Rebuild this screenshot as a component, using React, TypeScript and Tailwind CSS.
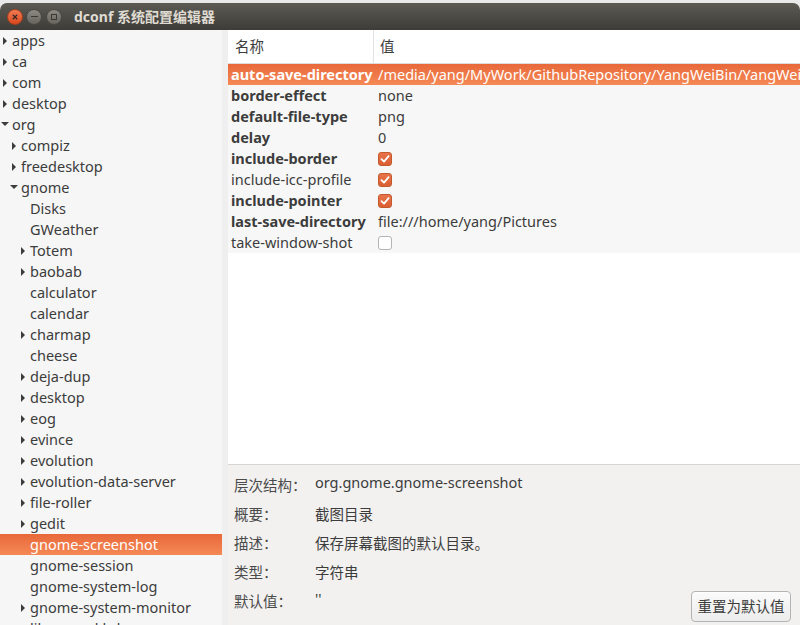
import React from 'react';

type Node = { name: string; level: number; arrow?: 'right' | 'down'; selected?: boolean };

const tree: Node[] = [
  { name: 'apps', level: 0, arrow: 'right' },
  { name: 'ca', level: 0, arrow: 'right' },
  { name: 'com', level: 0, arrow: 'right' },
  { name: 'desktop', level: 0, arrow: 'right' },
  { name: 'org', level: 0, arrow: 'down' },
  { name: 'compiz', level: 1, arrow: 'right' },
  { name: 'freedesktop', level: 1, arrow: 'right' },
  { name: 'gnome', level: 1, arrow: 'down' },
  { name: 'Disks', level: 2 },
  { name: 'GWeather', level: 2 },
  { name: 'Totem', level: 2, arrow: 'right' },
  { name: 'baobab', level: 2, arrow: 'right' },
  { name: 'calculator', level: 2 },
  { name: 'calendar', level: 2 },
  { name: 'charmap', level: 2, arrow: 'right' },
  { name: 'cheese', level: 2 },
  { name: 'deja-dup', level: 2, arrow: 'right' },
  { name: 'desktop', level: 2, arrow: 'right' },
  { name: 'eog', level: 2, arrow: 'right' },
  { name: 'evince', level: 2, arrow: 'right' },
  { name: 'evolution', level: 2, arrow: 'right' },
  { name: 'evolution-data-server', level: 2, arrow: 'right' },
  { name: 'file-roller', level: 2, arrow: 'right' },
  { name: 'gedit', level: 2, arrow: 'right' },
  { name: 'gnome-screenshot', level: 2, selected: true },
  { name: 'gnome-session', level: 2 },
  { name: 'gnome-system-log', level: 2 },
  { name: 'gnome-system-monitor', level: 2, arrow: 'right' },
  { name: 'libgnomekbd', level: 2, arrow: 'right' },
];

type Key = { name: string; bold: boolean; value?: string; check?: boolean; selected?: boolean };

const keys: Key[] = [
  { name: 'auto-save-directory', bold: true, value: '/media/yang/MyWork/GithubRepository/YangWeiBin/YangWeiBin.github.io', selected: true },
  { name: 'border-effect', bold: true, value: 'none' },
  { name: 'default-file-type', bold: true, value: 'png' },
  { name: 'delay', bold: true, value: '0' },
  { name: 'include-border', bold: true, check: true },
  { name: 'include-icc-profile', bold: false, check: true },
  { name: 'include-pointer', bold: true, check: true },
  { name: 'last-save-directory', bold: true, value: 'file:///home/yang/Pictures' },
  { name: 'take-window-shot', bold: false, check: false },
];

const indent = ['pl-0', 'pl-[9px]', 'pl-[18px]'];

function Arrow({ dir, light }: { dir?: 'right' | 'down'; light?: boolean }) {
  const fill = light ? '#ffffff' : '#3c3c3c';
  if (dir === 'right')
    return (
      <svg width="5" height="8" viewBox="0 0 5 8" className="ml-[3px]">
        <path d="M0 0 L4 4 L0 8 Z" fill={fill} />
      </svg>
    );
  if (dir === 'down')
    return (
      <svg width="8" height="5" viewBox="0 0 8 5" className="ml-[1px]">
        <path d="M0 0 L8 0 L4 4 Z" fill={fill} />
      </svg>
    );
  return null;
}

function CheckBox({ on }: { on: boolean }) {
  if (!on) return <div className="w-[14px] h-[14px] rounded-[3px] border border-[#b3b3b3] bg-white" />;
  return (
    <div className="w-[14px] h-[14px] rounded-[3px] border border-[#c4582f] bg-gradient-to-b from-[#e8744a] to-[#da5f31] flex items-center justify-center">
      <svg width="10" height="10" viewBox="0 0 10 10">
        <path d="M1.5 5.2 L4 7.6 L8.6 2.2" fill="none" stroke="#ffffff" strokeWidth="1.8" strokeLinecap="round" strokeLinejoin="round" />
      </svg>
    </div>
  );
}

export default function App() {
  return (
    <div
      className="w-[800px] h-[625px] overflow-hidden bg-[#e9e9e9] flex flex-col text-[#3c3c3c]"
      style={{ fontFamily: '"Noto Sans", "Noto Sans CJK SC", sans-serif' }}
    >
      <div className="h-[3px] shrink-0" />

      {/* title bar */}
      <div className="h-[27px] shrink-0 rounded-t-[7px] bg-gradient-to-b from-[#5c5a53] to-[#3d3c38] flex items-center pl-[7px]">
        <div className="w-[16px] h-[16px] rounded-full bg-gradient-to-b from-[#f27b53] to-[#d9471a] border border-[#a8401c] flex items-center justify-center">
          <svg width="6" height="6" viewBox="0 0 6 6">
            <path d="M0.8 0.8 L5.2 5.2 M5.2 0.8 L0.8 5.2" stroke="#3c2a22" strokeWidth="1.3" />
          </svg>
        </div>
        <div className="ml-[3px] w-[16px] h-[16px] rounded-full bg-gradient-to-b from-[#8d8a82] to-[#66645e] border border-[#4a4843] flex items-center justify-center">
          <div className="w-[7px] h-[1.5px] bg-[#3a3935]" />
        </div>
        <div className="ml-[4px] w-[16px] h-[16px] rounded-full bg-gradient-to-b from-[#8d8a82] to-[#66645e] border border-[#4a4843] flex items-center justify-center">
          <div className="w-[6px] h-[6px] border border-[#3a3935]" />
        </div>
        <span className="ml-[12px] text-[14px] font-bold text-[#dfdbd2] leading-none">dconf 系统配置编辑器</span>
      </div>

      <div className="flex flex-1 min-h-0">
        {/* sidebar tree */}
        <div className="w-[222px] shrink-0 bg-[#f6f6f6] overflow-hidden text-[14.5px]">
          {tree.map((n, i) => (
            <div
              key={i}
              className={`h-[21px] flex items-center whitespace-nowrap ${indent[n.level]} ${
                n.selected ? 'bg-gradient-to-b from-[#e8683a] to-[#f58955] text-white' : ''
              }`}
            >
              <div className="w-[12px] shrink-0 flex items-center">
                <Arrow dir={n.arrow} light={n.selected} />
              </div>
              <span className="leading-none">{n.name}</span>
            </div>
          ))}
        </div>

        {/* pane handle */}
        <div className="w-[6px] shrink-0 bg-[#efefef]" />

        {/* right side */}
        <div className="flex-1 min-w-0 flex flex-col">
          <div className="h-[435px] shrink-0 bg-white border-b border-[#d6d6d6] overflow-hidden">
            <div className="h-[34px] flex border-b border-[#dcdcdc] text-[14.5px]">
              <div className="w-[146px] shrink-0 border-r border-[#e2e2e2] flex items-center pl-[7px]">名称</div>
              <div className="flex items-center pl-[6px]">值</div>
            </div>
            <div className="bg-[#f7f7f7] text-[14.5px]">
              {keys.map((k, i) => (
                <div
                  key={i}
                  className={`h-[21px] flex items-center whitespace-nowrap ${
                    k.selected ? 'bg-gradient-to-b from-[#e8683a] to-[#f58955] text-white' : ''
                  }`}
                >
                  <div className={`w-[150px] shrink-0 pl-[3px] ${k.bold ? 'font-bold' : ''}`}>{k.name}</div>
                  <div className="flex items-center">
                    {k.check === undefined ? k.value : <CheckBox on={k.check} />}
                  </div>
                </div>
              ))}
            </div>
          </div>

          {/* details */}
          <div className="flex-1 bg-[#f2f1f0] flex text-[14.5px]">
            <div className="flex-1 pt-[6px] pl-[6px]">
              {[
                ['层次结构：', 'org.gnome.gnome-screenshot'],
                ['概要：', '截图目录'],
                ['描述：', '保存屏幕截图的默认目录。'],
                ['类型：', '字符串'],
                ['默认值：', "''"],
              ].map(([l, v], i) => (
                <div key={i} className="h-[29px] flex items-center whitespace-nowrap">
                  <span className="w-[81px] shrink-0 text-[#4a4a4a]">{l}</span>
                  <span className={i === 0 || i === 4 ? '-mt-[6px]' : ''}>{v}</span>
                </div>
              ))}
            </div>
            <div className="self-end mb-[3px] mr-[9px]">
              <button className="w-[100px] h-[31px] rounded-[4px] border border-[#b4b4b4] bg-gradient-to-b from-[#fbfbfb] to-[#ececec] text-[14.5px] text-[#3c3c3c] shadow-[0_1px_0_rgba(255,255,255,0.8)_inset]">
                重置为默认值
              </button>
            </div>
          </div>
        </div>
      </div>
    </div>
  );
}
